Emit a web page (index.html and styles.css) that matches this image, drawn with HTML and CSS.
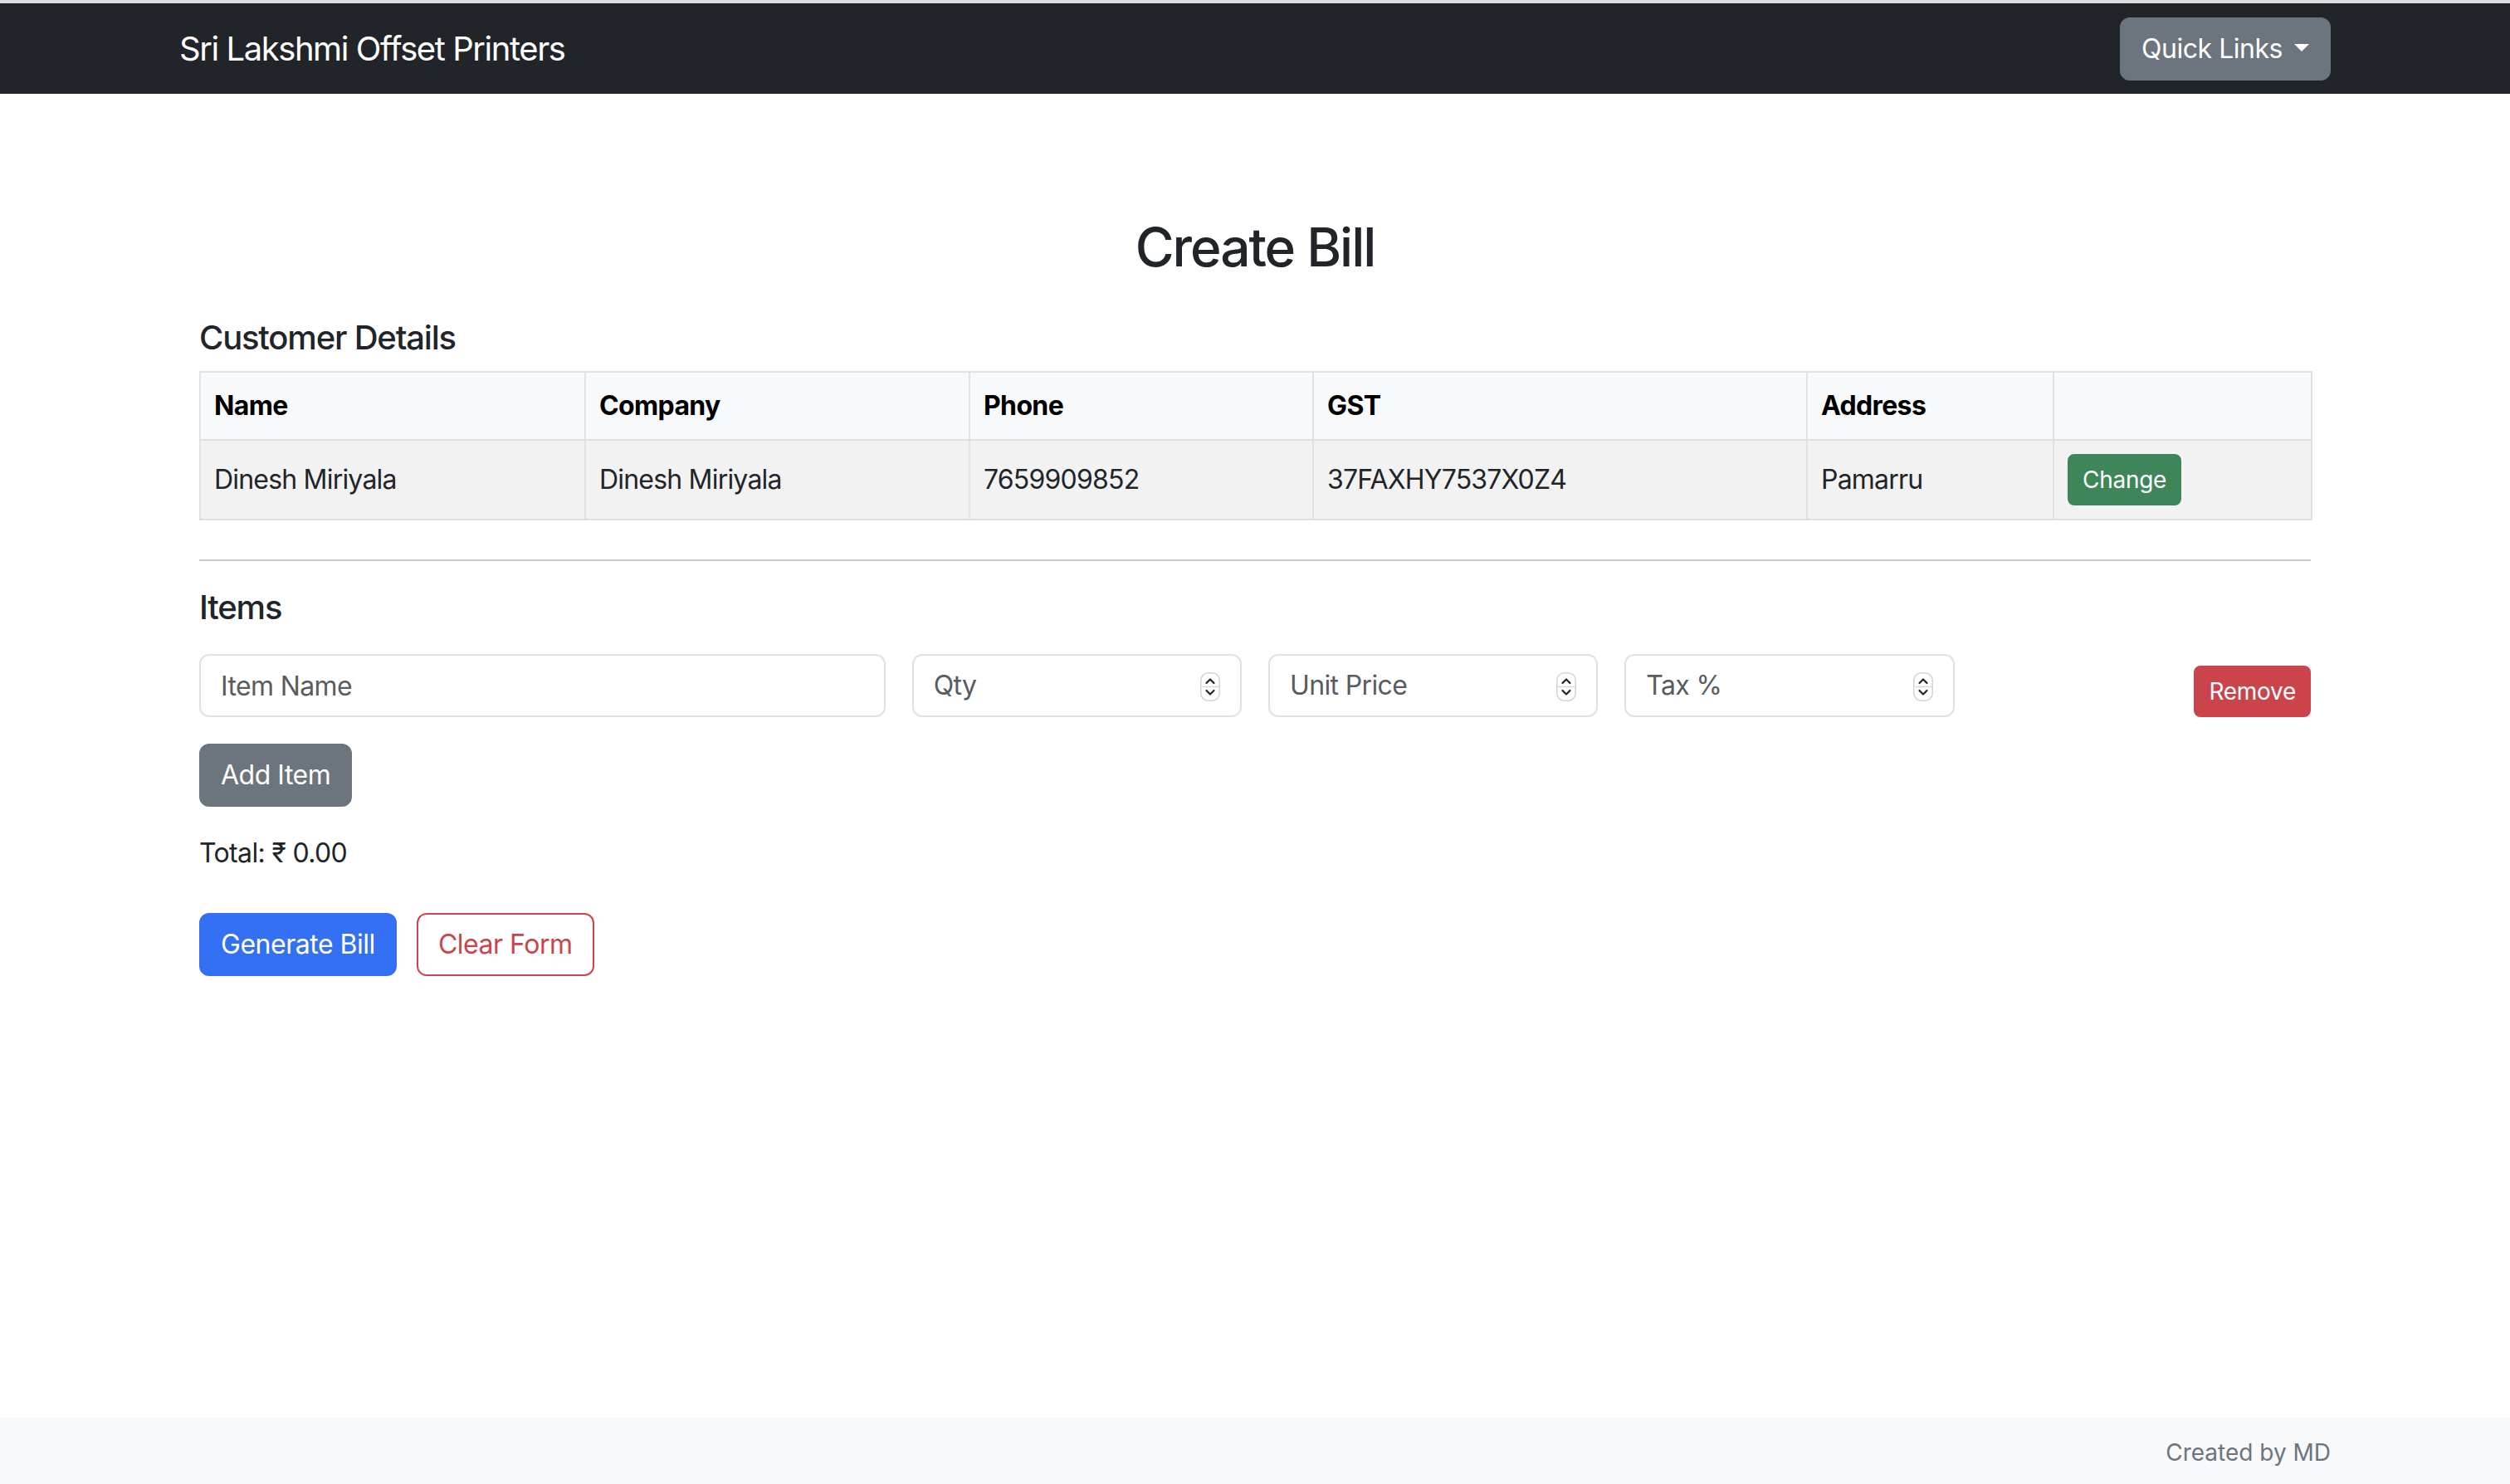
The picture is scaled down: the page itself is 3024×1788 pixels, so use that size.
FILE: index.html
```html
<!DOCTYPE html>
<html lang="en">
<head>
<meta charset="utf-8">
<title>Create Bill</title>
<link rel="stylesheet" href="styles.css">
</head>
<body>
<div class="page">
  <nav class="navbar">
    <div class="nav-inner">
      <a class="brand" href="#">Sri Lakshmi Offset Printers</a>
      <button class="btn btn-secondary dropdown-toggle" type="button">Quick Links</button>
    </div>
  </nav>

  <main class="main">
    <h2 class="title">Create Bill</h2>

    <h5 class="section customer-title">Customer Details</h5>
    <table class="table">
      <colgroup>
        <col class="c-name"><col class="c-company"><col class="c-phone"><col class="c-gst"><col class="c-address"><col class="c-action">
      </colgroup>
      <thead>
        <tr><th>Name</th><th>Company</th><th>Phone</th><th>GST</th><th>Address</th><th></th></tr>
      </thead>
      <tbody>
        <tr>
          <td>Dinesh Miriyala</td>
          <td>Dinesh Miriyala</td>
          <td>7659909852</td>
          <td>37FAXHY7537X0Z4</td>
          <td>Pamarru</td>
          <td><button class="btn btn-sm btn-success" type="button">Change</button></td>
        </tr>
      </tbody>
    </table>

    <hr class="divider">

    <h5 class="section items-title">Items</h5>
    <div class="item-row">
      <input class="form-control" type="text" placeholder="Item Name">
      <div class="form-control num">
        <input type="text" placeholder="Qty">
        <svg class="spin" width="24" height="35" viewBox="0 0 24 35"><rect x="0.75" y="0.75" width="22.5" height="33.5" rx="9" fill="#fff" stroke="#d4d4d4" stroke-width="1.5"/><line x1="1.5" y1="17.5" x2="22.5" y2="17.5" stroke="#d9d9d9" stroke-width="1.5"/><path d="M7.5 13 L12 8.5 L16.5 13" fill="none" stroke="#222" stroke-width="2.2" stroke-linecap="round" stroke-linejoin="round"/><path d="M7.5 22 L12 26.5 L16.5 22" fill="none" stroke="#222" stroke-width="2.2" stroke-linecap="round" stroke-linejoin="round"/></svg>
      </div>
      <div class="form-control num">
        <input type="text" placeholder="Unit Price">
        <svg class="spin" width="24" height="35" viewBox="0 0 24 35"><rect x="0.75" y="0.75" width="22.5" height="33.5" rx="9" fill="#fff" stroke="#d4d4d4" stroke-width="1.5"/><line x1="1.5" y1="17.5" x2="22.5" y2="17.5" stroke="#d9d9d9" stroke-width="1.5"/><path d="M7.5 13 L12 8.5 L16.5 13" fill="none" stroke="#222" stroke-width="2.2" stroke-linecap="round" stroke-linejoin="round"/><path d="M7.5 22 L12 26.5 L16.5 22" fill="none" stroke="#222" stroke-width="2.2" stroke-linecap="round" stroke-linejoin="round"/></svg>
      </div>
      <div class="form-control num">
        <input type="text" placeholder="Tax %">
        <svg class="spin" width="24" height="35" viewBox="0 0 24 35"><rect x="0.75" y="0.75" width="22.5" height="33.5" rx="9" fill="#fff" stroke="#d4d4d4" stroke-width="1.5"/><line x1="1.5" y1="17.5" x2="22.5" y2="17.5" stroke="#d9d9d9" stroke-width="1.5"/><path d="M7.5 13 L12 8.5 L16.5 13" fill="none" stroke="#222" stroke-width="2.2" stroke-linecap="round" stroke-linejoin="round"/><path d="M7.5 22 L12 26.5 L16.5 22" fill="none" stroke="#222" stroke-width="2.2" stroke-linecap="round" stroke-linejoin="round"/></svg>
      </div>
      <div class="remove-cell">
        <button class="btn btn-sm btn-danger" type="button">Remove</button>
      </div>
    </div>

    <button class="btn btn-secondary add-btn" type="button">Add Item</button>

    <p class="total">Total: ₹ 0.00</p>

    <div class="actions">
      <button class="btn btn-primary" type="button">Generate Bill</button>
      <button class="btn btn-outline-danger" type="button">Clear Form</button>
    </div>
  </main>

  <footer class="footer">
    <div class="footer-inner">Created by MD</div>
  </footer>
</div>
</body>
</html>
```

FILE: styles.css
```css
*, *::before, *::after { box-sizing: border-box; }

html, body { margin: 0; padding: 0; }

body {
  font-family: Inter, "Noto Sans", "DejaVu Sans", sans-serif;
  font-size: 32px;
  line-height: 48px;
  letter-spacing: -0.02em;
  color: #212529;
  background: #fff;
}

.page {
  display: flex;
  flex-direction: column;
  min-height: 100vh;
  border-top: 4px solid #dcdcdc;
}

/* Navbar */
.navbar {
  background: #212529;
  height: 109px;
  display: flex;
  align-items: center;
}

.nav-inner {
  width: 100%;
  max-width: 2640px;
  margin: 0 auto;
  padding: 0 24px;
  display: flex;
  align-items: center;
  justify-content: space-between;
}

.brand {
  color: #fff;
  text-decoration: none;
  font-size: 40px;
  line-height: 60px;
  letter-spacing: -0.036em;
}

/* Buttons */
.btn {
  font-family: inherit;
  font-size: 32px;
  font-weight: 400;
  line-height: 48px;
  letter-spacing: -0.015em;
  padding: 12px 24px;
  border: 2px solid transparent;
  border-radius: 12px;
  color: #fff;
  background: transparent;
  display: inline-block;
  cursor: pointer;
  white-space: nowrap;
}

.btn-sm {
  font-size: 28px;
  line-height: 42px;
  padding: 8px 16px;
  border-radius: 8px;
  letter-spacing: -0.01em;
}

.btn-secondary { background: #6c757d; border-color: #6c757d; }
.btn-success { background: #3e865a; border-color: #3e865a; }
.btn-danger { background: #cb444b; border-color: #cb444b; }
.btn-primary { background: #3470f3; border-color: #3470f3; }
.btn-outline-danger { color: #cb444b; border-color: #cb444b; background: #fff; }

.dropdown-toggle::after {
  content: "";
  display: inline-block;
  margin-left: 14px;
  vertical-align: 8px;
  border-top: 9.6px solid #fff;
  border-left: 9.6px solid transparent;
  border-right: 9.6px solid transparent;
  border-bottom: 0;
}

/* Main */
.main {
  width: 100%;
  max-width: 2544px;
  margin: 0 auto;
}

.title {
  margin: 146px 0 0;
  font-size: 64px;
  line-height: 77px;
  font-weight: 500;
  letter-spacing: -0.032em;
  text-align: center;
}

.section {
  margin: 42px 0 0;
  font-size: 40px;
  line-height: 48px;
  font-weight: 500;
  letter-spacing: -0.03em;
}

.customer-title { margin-top: 47px; }

/* Table */
.table {
  width: 100%;
  margin: 16px 0 0;
  border-collapse: collapse;
  table-layout: fixed;
}

.c-name { width: 464px; }
.c-company { width: 463px; }
.c-phone { width: 414px; }
.c-gst { width: 595px; }
.c-address { width: 297px; }
.c-action { width: 311px; }

.table th,
.table td {
  border: 2px solid #dee2e6;
  padding: 16px;
  vertical-align: middle;
  text-align: left;
}

.table th {
  background: #f8f9fa;
  color: #000;
  font-weight: 700;
}

.table td {
  background: #f2f2f2;
  color: #212529;
  letter-spacing: -0.025em;
}

.divider {
  margin: 47px 0 0;
  border: 0;
  border-top: 2px solid #c8c9ca;
}

.items-title { margin-top: 32px; }

/* Items row */
.item-row {
  margin-top: 32px;
  display: grid;
  grid-template-columns: calc((100% + 32px) / 3 - 32px) repeat(4, minmax(0, 1fr));
  column-gap: 32px;
}

.item-row > * { min-width: 0; }

.form-control {
  font-family: inherit;
  font-size: 32px;
  line-height: 48px;
  letter-spacing: -0.02em;
  height: 76px;
  padding: 12px 24px;
  border: 2px solid #dee2e6;
  border-radius: 12px;
  color: #212529;
  background: #fff;
  width: 100%;
  outline: none;
}

.form-control::placeholder,
.num input::placeholder {
  color: #595c5f;
  opacity: 1;
}

.num {
  display: flex;
  align-items: center;
}

.num input {
  flex: 1;
  min-width: 0;
  width: 0;
  border: 0;
  outline: 0;
  padding: 0;
  margin: 0;
  height: 48px;
  font-family: inherit;
  font-size: 32px;
  line-height: 48px;
  letter-spacing: -0.02em;
  color: #212529;
  background: transparent;
}

.spin {
  flex: none;
  margin-left: 8px;
  margin-top: 2px;
}

.remove-cell {
  display: flex;
  justify-content: flex-end;
  align-items: flex-end;
}

.add-btn { margin-top: 32px; align-self: flex-start; }

.total {
  margin: 32px 0 0;
  font-size: 32px;
  line-height: 48px;
}

.actions {
  margin-top: 48px;
  display: flex;
  gap: 24px;
}

/* Footer */
.footer {
  margin-top: auto;
  background: #f8f9fa;
  height: 80px;
}

.footer-inner {
  max-width: 2640px;
  margin: 0 auto;
  padding: 21px 24px 0;
  text-align: right;
  color: #6c757d;
  font-size: 28px;
  line-height: 42px;
  letter-spacing: 0;
}
```
